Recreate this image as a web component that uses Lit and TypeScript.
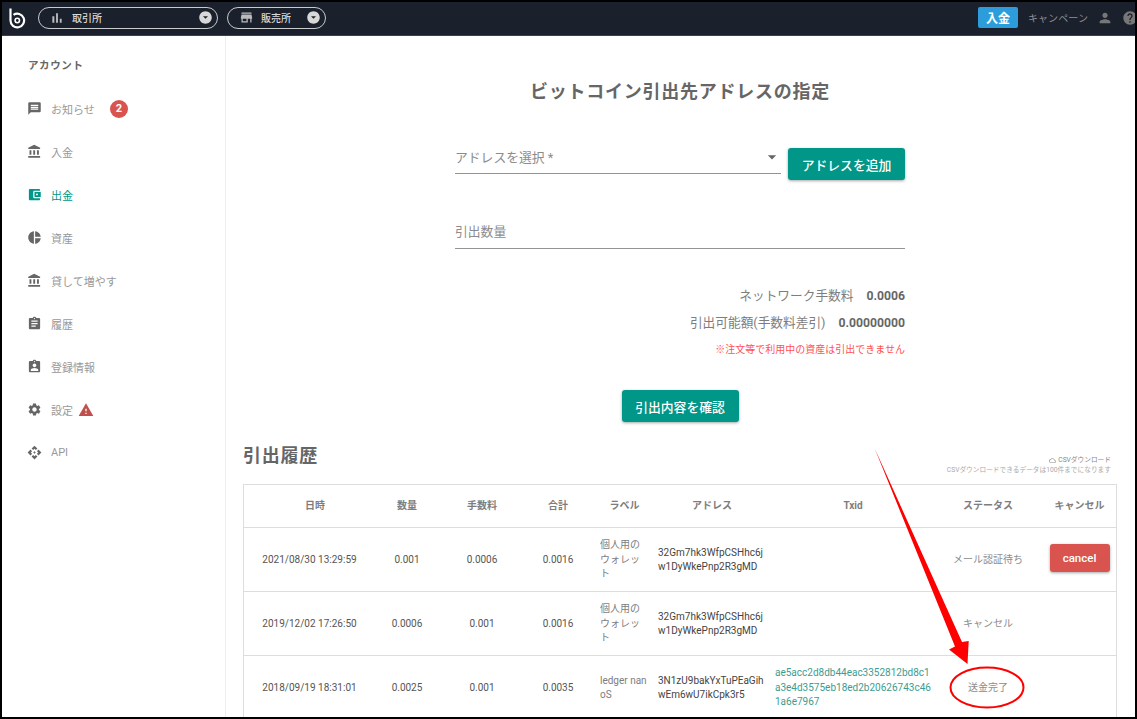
import { LitElement, html, css, svg } from 'lit';
import { customElement } from 'lit/decorators.js';

const ICONS: Record<string, string> = {
  chat: 'M20 2H4c-1.1 0-2 .9-2 2v18l4-4h14c1.1 0 2-.9 2-2V4c0-1.1-.9-2-2-2zm-2 12H6v-2h12v2zm0-3H6V9h12v2zm0-3H6V6h12v2z',
  bank: 'M4 10v7h3v-7H4zm6 0v7h3v-7h-3zM2 22h19v-3H2v3zm14-12v7h3v-7h-3zm-4.5-9L2 6v2h19V6l-9.5-5z',
  wallet: 'M21 18v1c0 1.1-.9 2-2 2H5c-1.11 0-2-.9-2-2V5c0-1.1.89-2 2-2h14c1.1 0 2 .9 2 2v1h-9c-1.11 0-2 .9-2 2v8c0 1.1.89 2 2 2h9zm-9-2h10V8H12v8zm4-2.5c-.83 0-1.5-.67-1.5-1.5s.67-1.5 1.5-1.5 1.5.67 1.5 1.5-.67 1.5-1.5 1.5z',
  pie: 'M11 2v20c-5.07-.5-9-4.79-9-10s3.93-9.5 9-10zm2.03 0v8.99H22c-.47-4.74-4.24-8.52-8.97-8.99zm0 11.01V22c4.74-.47 8.5-4.25 8.97-8.99h-8.97z',
  assignment: 'M19 3h-4.18C14.4 1.84 13.3 1 12 1c-1.3 0-2.4.84-2.82 2H5c-1.1 0-2 .9-2 2v14c0 1.1.9 2 2 2h14c1.1 0 2-.9 2-2V5c0-1.1-.9-2-2-2zm-7 0c.55 0 1 .45 1 1s-.45 1-1 1-1-.45-1-1 .45-1 1-1zm2 14H7v-2h7v2zm3-4H7v-2h10v2zm0-4H7V7h10v2z',
  ind: 'M19 3h-4.18C14.4 1.84 13.3 1 12 1c-1.3 0-2.4.84-2.82 2H5c-1.1 0-2 .9-2 2v14c0 1.1.9 2 2 2h14c1.1 0 2-.9 2-2V5c0-1.1-.9-2-2-2zm-7 0c.55 0 1 .45 1 1s-.45 1-1 1-1-.45-1-1 .45-1 1-1zm0 4c1.66 0 3 1.34 3 3s-1.34 3-3 3-3-1.34-3-3 1.34-3 3-3zm6 12H6v-1.4c0-2 4-3.1 6-3.1s6 1.1 6 3.1V19z',
  settings: 'M19.14 12.94c.04-.3.06-.61.06-.94 0-.32-.02-.64-.07-.94l2.03-1.58c.18-.14.23-.41.12-.61l-1.92-3.32c-.12-.22-.37-.29-.59-.22l-2.39.96c-.5-.38-1.03-.7-1.62-.94l-.36-2.54c-.04-.24-.24-.41-.48-.41h-3.84c-.24 0-.43.17-.47.41l-.36 2.54c-.59.24-1.13.57-1.62.94l-2.39-.96c-.22-.08-.47 0-.59.22L2.74 8.87c-.12.21-.08.47.12.61l2.03 1.58c-.05.3-.09.63-.09.94s.02.64.07.94l-2.03 1.58c-.18.14-.23.41-.12.61l1.92 3.32c.12.22.37.29.59.22l2.39-.96c.5.38 1.03.7 1.62.94l.36 2.54c.05.24.24.41.48.41h3.84c.24 0 .44-.17.47-.41l.36-2.54c.59-.24 1.13-.56 1.62-.94l2.39.96c.22.08.47 0 .59-.22l1.92-3.32c.12-.22.07-.47-.12-.61l-2.01-1.58zM12 15.6c-1.98 0-3.6-1.62-3.6-3.6s1.62-3.6 3.6-3.6 3.6 1.62 3.6 3.6-1.62 3.6-3.6 3.6z',
  api: 'M14 12l-2 2-2-2 2-2 2 2zm-2-6l2.12 2.12 2.5-2.5L12 1 7.38 5.62l2.5 2.5L12 6zm-6 6l2.12-2.12-2.5-2.5L1 12l4.62 4.62 2.5-2.5L6 12zm12 0l-2.12 2.12 2.5 2.5L23 12l-4.62-4.62-2.5 2.5L18 12zm-6 6l-2.12-2.12-2.5 2.5L12 23l4.62-4.62-2.5-2.5L12 18z',
  warning: 'M1 21h22L12 2 1 21zm12-3h-2v-2h2v2zm0-4h-2v-4h2v4z',
  bars: 'M5 9.2h3V19H5zM10.6 5h2.8v14h-2.8zm5.6 8H19v6h-2.8z',
  store: 'M20 4H4v2h16V4zm1 10v-2l-1-5H4l-1 5v2h1v6h10v-6h4v6h2v-6h1zm-9 4H6v-4h6v4z',
  person: 'M12 12c2.21 0 4-1.79 4-4s-1.79-4-4-4-4 1.79-4 4 1.79 4 4 4zm0 2c-2.67 0-8 1.34-8 4v2h16v-2c0-2.66-5.33-4-8-4z',
  help: 'M12 2C6.48 2 2 6.48 2 12s4.48 10 10 10 10-4.48 10-10S17.52 2 12 2zm1 17h-2v-2h2v2zm2.07-7.75l-.9.92C13.45 12.9 13 13.5 13 15h-2v-.5c0-1.1.45-2.1 1.17-2.83l1.24-1.26c.37-.36.59-.86.59-1.41 0-1.1-.9-2-2-2s-2 .9-2 2H8c0-2.21 1.79-4 4-4s4 1.79 4 4c0 .88-.36 1.68-.93 2.25z',
  dropCircle: 'M12 2C6.48 2 2 6.48 2 12s4.48 10 10 10 10-4.48 10-10S17.52 2 12 2zm0 12l-4-4h8l-4 4z',
  caret: 'M7 10l5 5 5-5z',
  cloud: 'M19.35 10.04C18.67 6.59 15.64 4 12 4 9.11 4 6.6 5.64 5.35 8.04 2.34 8.36 0 10.91 0 14c0 3.31 2.69 6 6 6h13c2.76 0 5-2.24 5-5 0-2.64-2.05-4.78-4.65-4.96zM19 18H6c-2.21 0-4-1.79-4-4s1.79-4 4-4h.71C7.37 7.69 9.48 6 12 6c3.04 0 5.5 2.46 5.5 5.5v.5H19c1.66 0 3 1.34 3 3s-1.34 3-3 3z',
};

const icon = (name: string, size: number, cls = '') => html`<svg class=${cls} width=${size} height=${size} viewBox="0 0 24 24" fill="currentColor"><path d=${ICONS[name]}></path></svg>`;

const NAV = [
  { icon: 'chat', label: 'お知らせ', badge: '2' },
  { icon: 'bank', label: '入金' },
  { icon: 'wallet', label: '出金', active: true },
  { icon: 'pie', label: '資産' },
  { icon: 'bank', label: '貸して増やす' },
  { icon: 'assignment', label: '履歴' },
  { icon: 'ind', label: '登録情報' },
  { icon: 'settings', label: '設定', warn: true },
  { icon: 'api', label: 'API' },
];

const HEAD = ['日時', '数量', '手数料', '合計', 'ラベル', 'アドレス', 'Txid', 'ステータス', 'キャンセル'];

const ROWS = [
  { date: '2021/08/30 13:29:59', qty: '0.001', fee: '0.0006', total: '0.0016', label: '個人用のウォレット', addr: '32Gm7hk3WfpCSHhc6jw1DyWkePnp2R3gMD', txid: '', status: 'メール認証待ち', cancel: true },
  { date: '2019/12/02 17:26:50', qty: '0.0006', fee: '0.001', total: '0.0016', label: '個人用のウォレット', addr: '32Gm7hk3WfpCSHhc6jw1DyWkePnp2R3gMD', txid: '', status: 'キャンセル' },
  { date: '2018/09/19 18:31:01', qty: '0.0025', fee: '0.001', total: '0.0035', label: 'ledger nanoS', addr: '3N1zU9bakYxTuPEaGihwEm6wU7ikCpk3r5', txid: 'ae5acc2d8db44eac3352812bd8c1a3e4d3575eb18ed2b20626743c461a6e7967', status: '送金完了' },
];

@customElement('app-root')
export class AppRoot extends LitElement {
  static styles = css`
    :host {
      display: block;
      width: 1137px;
      height: 719px;
      font-family: Roboto, "Noto Sans CJK JP", sans-serif;
      color: #666;
    }
    .frame {
      position: relative;
      box-sizing: border-box;
      width: 1137px;
      height: 719px;
      border: 2px solid #000;
      overflow: hidden;
      background: #fff;
      display: flex;
      flex-direction: column;
    }
    svg { display: block; flex: none; }

    .topbar {
      flex: none;
      height: 34px;
      box-sizing: border-box;
      background: #1a202c;
      border-bottom: 1px solid #3a404a;
      display: flex;
      align-items: center;
      padding: 0 0 2px 6px;
    }
    .logo { margin-right: 11px; }
    .pill {
      box-sizing: border-box;
      height: 22px;
      border: 1px solid #c8cacc;
      border-radius: 11px;
      display: flex;
      align-items: center;
      padding: 0 4px 0 12px;
      margin-right: 9px;
      color: #d8d8d8;
      font-size: 10px;
      font-weight: 500;
    }
    .pill.wide { width: 180px; }
    .pill.narrow { width: 99px; }
    .pill span { margin-left: 7px; flex: 1; }
    .pill .ic { color: #bbb; }
    .pill .ic-bars { margin-left: -2px; }
    .pill .ic-store { margin-left: -1px; }
    .top-right {
      margin-left: auto;
      display: flex;
      align-items: center;
      color: #8b8e94;
      font-size: 10px;
    }
    .deposit {
      width: 40px;
      height: 21px;
      border-radius: 2px;
      background: #2d9cdb;
      color: #fff;
      font-size: 12px;
      font-weight: 700;
      display: flex;
      align-items: center;
      justify-content: center;
      margin-right: 10px;
    }
    .campaign { margin-right: 9px; letter-spacing: .1px; }
    .person { margin-right: 9px; color: #777; }
    .help { margin-right: -3px; color: #777; }

    .body { flex: 1; display: flex; min-height: 0; }
    .side {
      flex: none;
      width: 224px;
      box-sizing: border-box;
      border-right: 1px solid #eee;
      padding: 22px 0 0 25px;
    }
    .side h3 {
      margin: 0 0 13px 1px;
      font-size: 10.5px;
      line-height: 16px;
      font-weight: 700;
      color: #666;
      letter-spacing: .6px;
    }
    .nav {
      height: 43px;
      display: flex;
      align-items: center;
      font-size: 11px;
      color: #999;
    }
    .nav .ic { color: #666; margin-right: 9px; }
    .nav.active, .nav.active .ic { color: #009688; }
    .badge {
      width: 18px;
      height: 18px;
      border-radius: 50%;
      background: #d9534f;
      color: #fff;
      font-size: 11px;
      font-weight: 700;
      display: flex;
      align-items: center;
      justify-content: center;
      margin-left: 15px;
    }
    .warn { color: #c0504d; margin-left: 5px; }

    .main {
      flex: 1;
      min-width: 0;
      padding: 44px 18px 0 17px;
    }
    .title {
      margin: 0;
      text-align: center;
      font-size: 18px;
      line-height: 24px;
      font-weight: 700;
      letter-spacing: .75px;
      color: #666;
    }
    .form { width: 450px; margin: 44px auto 0; }
    .select-row { display: flex; gap: 7px; align-items: flex-start; }
    .field {
      flex: 1;
      box-sizing: border-box;
      display: flex;
      align-items: center;
      justify-content: space-between;
      border-bottom: 1px solid #949494;
      font-size: 12.8px;
      color: #8c8c8c;
    }
    .select { height: 26px; padding-bottom: 8px; }
    .select svg { color: #666; margin-right: -1px; }
    .qty { height: 32px; margin-top: 37px; padding-bottom: 5px; }
    .btn {
      flex: none;
      box-sizing: border-box;
      width: 117px;
      height: 32px;
      border-radius: 3px;
      background: #009688;
      color: #fff;
      font-size: 12.8px;
      font-weight: 500;
      display: flex;
      align-items: center;
      justify-content: center;
      box-shadow: 0 1px 3px rgba(0,0,0,.35);
    }
    .fees { margin-top: 33px; text-align: right; font-size: 12.7px; }
    .fees div { height: 27px; line-height: 27px; color: #7d7d7d; }
    .fees b { margin-left: 13px; color: #666; font-weight: 700; font-size: 12.2px; }
    .fees .note { font-size: 10px; color: #ff5252; }
    .confirm { margin: 27px auto 0; }

    .history-head {
      display: flex;
      justify-content: space-between;
      height: 44px;
      margin-top: 18px;
    }
    .history-head h2 {
      margin: 0;
      font-size: 18px;
      line-height: 32px;
      font-weight: 700;
      letter-spacing: .75px;
      color: #666;
    }
    .csv {
      margin: 16px 6px 0 0;
      font-size: 6.7px;
      line-height: 9.5px;
      text-align: right;
      color: #aaa;
    }
    .csv-link { display: flex; justify-content: flex-end; align-items: center; gap: 2px; color: #888; }

    .table { border: 1px solid #ddd; border-bottom: 0; }
    .row {
      display: grid;
      grid-template-columns: 126px 74px 76px 76px 57px 118px 164px 106px 1fr;
      align-items: center;
      height: 64px;
      box-sizing: border-box;
      border-top: 1px solid #ddd;
      padding-top: 1px;
      font-size: 10px;
      line-height: 14.4px;
      color: #555;
      text-align: center;
    }
    .row.head {
      height: 42px;
      border-top: 0;
      padding-top: 0;
      font-weight: 700;
      color: #7d7d7d;
    }
    .head .first { padding-left: 16px; }
    .date { padding-left: 5px; }
    .wrap {
      box-sizing: border-box;
      text-align: left;
      word-break: break-all;
    }
    .label { padding: 0 5px 0 4px; color: #7d7d7d; }
    .addr { padding: 0 5px; color: #444; }
    .txid { padding: 0 4px; color: #3d9c91; }
    .status { color: #8c8c8c; }
    .last { padding-left: 2px; }
    .cancel {
      width: 60px;
      height: 28px;
      margin: -4px auto 0;
      border-radius: 3px;
      background: #d9534f;
      color: #fff;
      font-size: 11.5px;
      font-weight: 500;
      display: flex;
      align-items: center;
      justify-content: center;
      box-shadow: 0 1px 3px rgba(0,0,0,.35);
    }

    .overlay {
      position: absolute;
      left: -2px;
      top: -2px;
      pointer-events: none;
    }
  `;

  render() {
    return html`
      <div class="frame">
        <div class="topbar">
          <svg class="logo" width="19" height="22" viewBox="0 0 19 22" fill="none" stroke="#fff">
            <path d="M2.5 1.5v12a6.8 6.8 0 1 0 3-5.6" stroke-width="2.2"></path>
            <circle cx="9.3" cy="13.5" r="2.2" stroke-width="1.6"></circle>
          </svg>
          <div class="pill wide">
            ${icon('bars', 16, 'ic ic-bars')}<span>取引所</span>${icon('dropCircle', 15)}
          </div>
          <div class="pill narrow">
            ${icon('store', 15, 'ic ic-store')}<span>販売所</span>${icon('dropCircle', 15)}
          </div>
          <div class="top-right">
            <div class="deposit">入金</div>
            <div class="campaign">キャンペーン</div>
            ${icon('person', 16, 'person')}
            ${icon('help', 16, 'help')}
          </div>
        </div>
        <div class="body">
          <aside class="side">
            <h3>アカウント</h3>
            ${NAV.map(n => html`
              <div class="nav ${n.active ? 'active' : ''}">
                ${icon(n.icon, 15, 'ic')}
                <span>${n.label}</span>
                ${n.badge ? html`<div class="badge">${n.badge}</div>` : ''}
                ${n.warn ? icon('warning', 16, 'warn') : ''}
              </div>
            `)}
          </aside>
          <main class="main">
            <h1 class="title">ビットコイン引出先アドレスの指定</h1>
            <div class="form">
              <div class="select-row">
                <div class="field select"><span>アドレスを選択 *</span>${icon('caret', 20)}</div>
                <div class="btn">アドレスを追加</div>
              </div>
              <div class="field qty"><span>引出数量</span></div>
              <div class="fees">
                <div>ネットワーク手数料<b>0.0006</b></div>
                <div>引出可能額(手数料差引)<b>0.00000000</b></div>
                <div class="note">※注文等で利用中の資産は引出できません</div>
              </div>
            </div>
            <div class="btn confirm">引出内容を確認</div>
            <div class="history-head">
              <h2>引出履歴</h2>
              <div class="csv">
                <div class="csv-link">${icon('cloud', 7)}CSVダウンロード</div>
                <div>CSVダウンロードできるデータは100件までになります</div>
              </div>
            </div>
            <div class="table">
              <div class="row head">
                ${HEAD.map((h, i) => html`<div class=${i === 0 ? 'first' : i === 8 ? 'last' : ''}>${h}</div>`)}
              </div>
              ${ROWS.map(r => html`
                <div class="row">
                  <div class="date">${r.date}</div>
                  <div>${r.qty}</div>
                  <div>${r.fee}</div>
                  <div>${r.total}</div>
                  <div class="wrap label">${r.label}</div>
                  <div class="wrap addr">${r.addr}</div>
                  <div class="wrap txid">${r.txid}</div>
                  <div class="status">${r.status}</div>
                  <div class="last">${r.cancel ? html`<div class="cancel">cancel</div>` : ''}</div>
                </div>
              `)}
            </div>
          </main>
        </div>
        <svg class="overlay" width="1137" height="719" viewBox="0 0 1137 719">
          ${svg`
            <polygon fill="#ff0000" points="874.5,448 962,642 968.7,641 967.5,664 949,649.5 955,646.5"></polygon>
            <ellipse cx="987" cy="687.5" rx="36.5" ry="20" fill="none" stroke="#ff0000" stroke-width="2"></ellipse>
          `}
        </svg>
      </div>
    `;
  }
}
